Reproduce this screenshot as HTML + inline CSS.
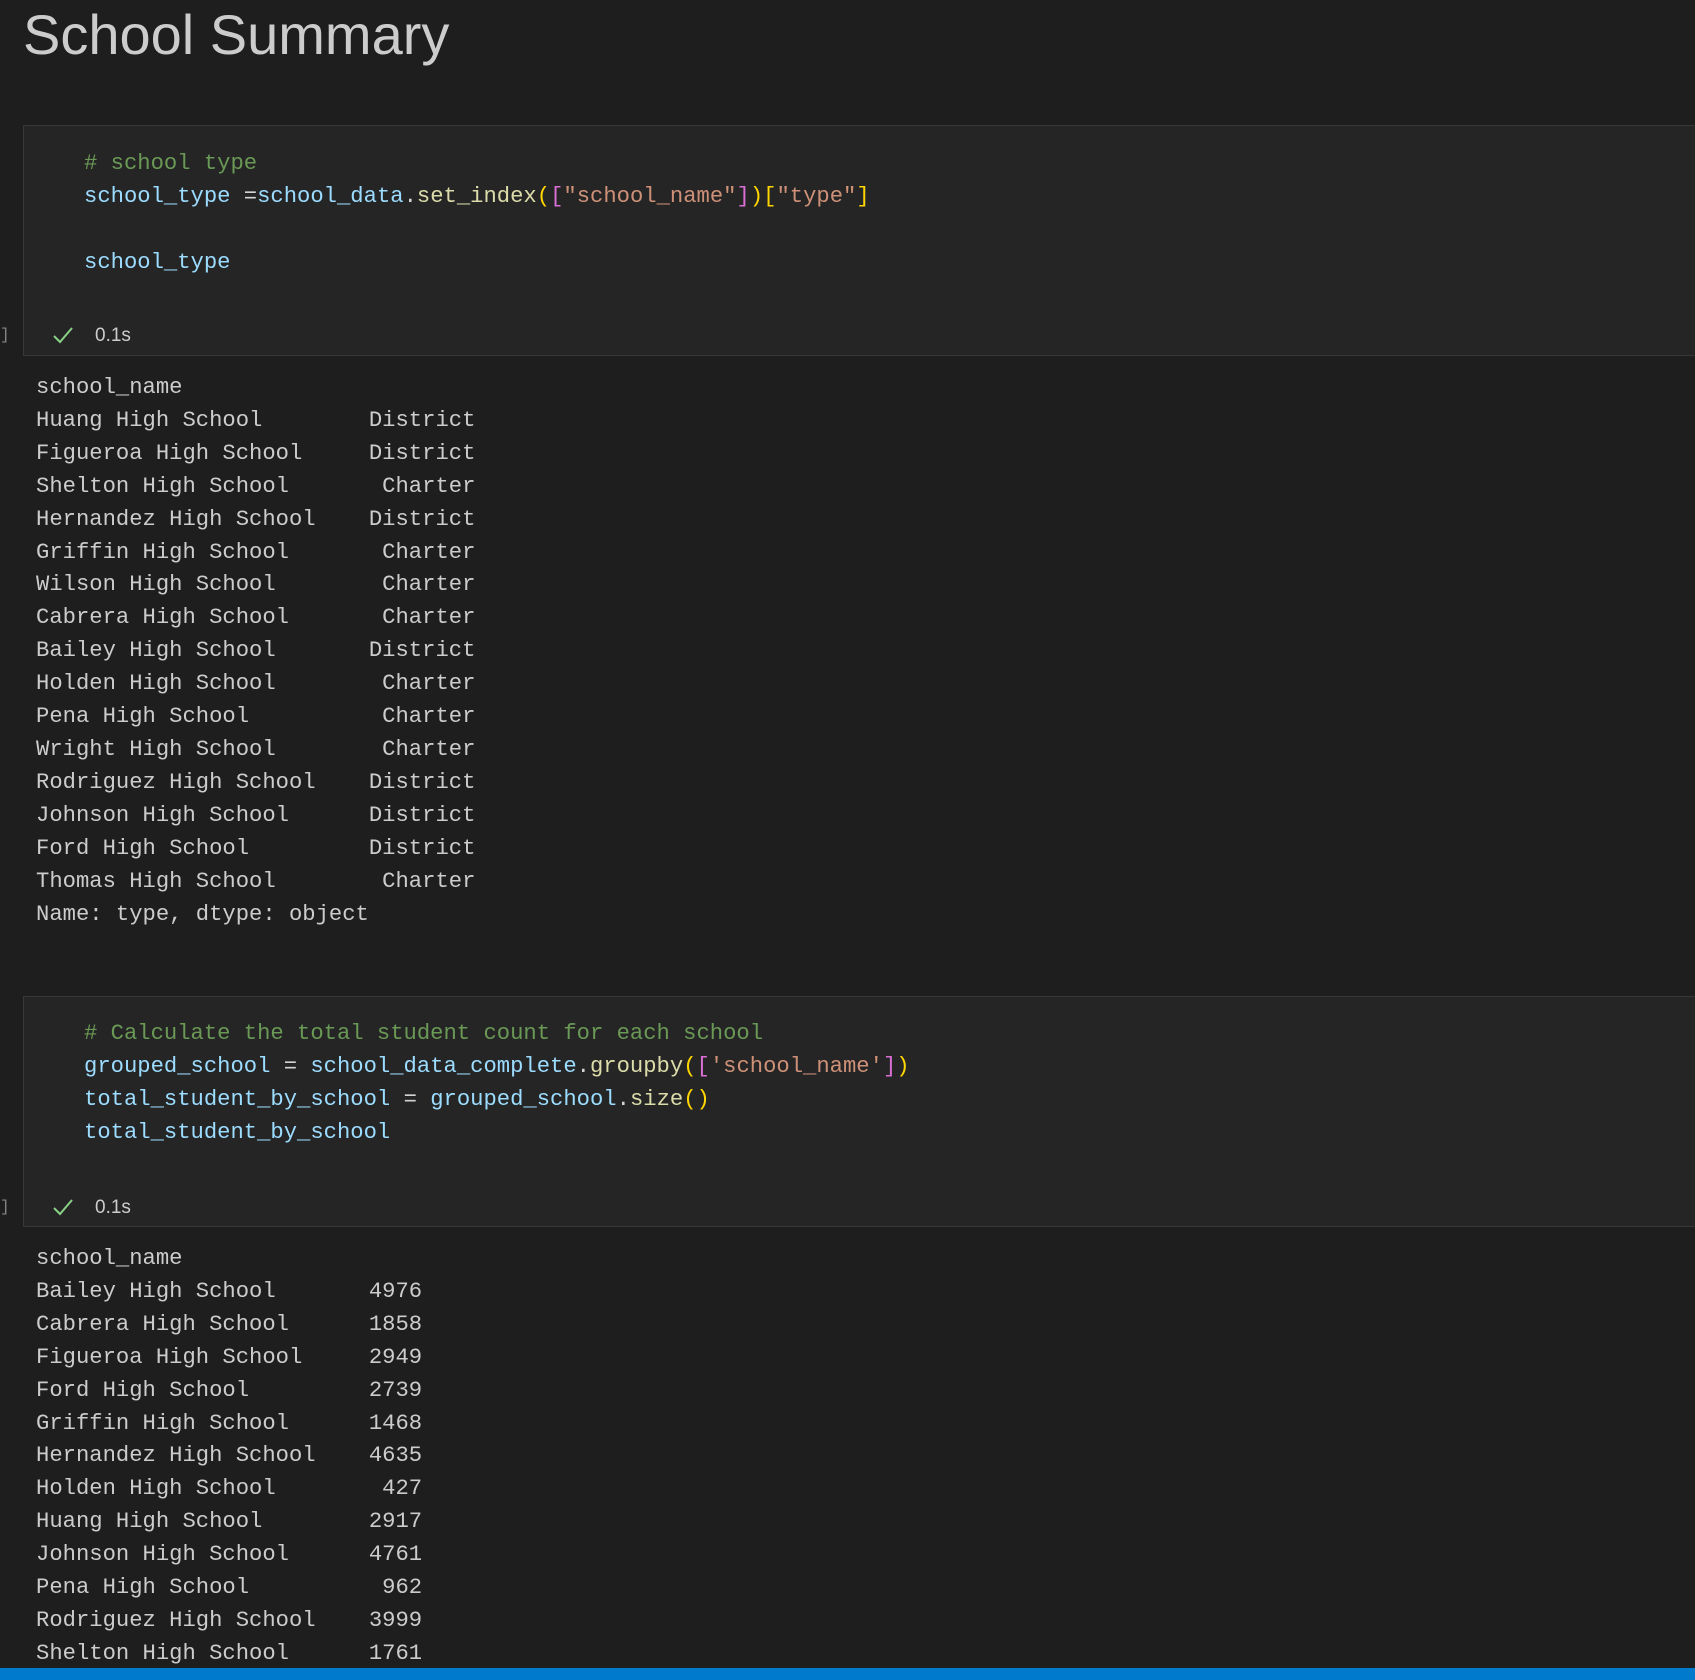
<!DOCTYPE html>
<html><head><meta charset="utf-8"><style>
html,body{margin:0;padding:0;background:#1e1e1e;width:1695px;height:1680px;overflow:hidden;position:relative;}
.t{position:absolute;left:23px;top:2px;font-family:"Liberation Sans",sans-serif;font-size:56px;color:#cccccc;white-space:nowrap;}
.cell{position:absolute;left:23px;right:-2px;background:#252526;border:1px solid #383838;}
pre{margin:0;font-family:"Liberation Mono",monospace;font-size:22.2px;line-height:32.9px;position:absolute;white-space:pre;}
.code{left:84px;color:#d4d4d4;}
.out{left:36px;color:#cccccc;}
.c{color:#6a9955}.v{color:#9cdcfe}.f{color:#dcdcaa}.s{color:#ce9178}.y{color:#ffd700}.p{color:#da70d6}.b{color:#179fff}
.st{position:absolute;font-family:"Liberation Sans",sans-serif;font-size:19px;color:#cccccc;}
.br{position:absolute;left:0;font-family:"Liberation Mono",monospace;font-size:16px;color:#858585;}
.bar{position:absolute;left:0;top:1668px;width:1695px;height:12px;background:#007acc;}
</style></head><body>
<div class="t">School Summary</div>

<div class="cell" style="top:125px;height:229px;"></div>
<pre class="code" style="top:148px;"><span class="c"># school type</span>
<span class="v">school_type</span> =<span class="v">school_data</span>.<span class="f">set_index</span><span class="y">(</span><span class="p">[</span><span class="s">"school_name"</span><span class="p">]</span><span class="y">)</span><span class="y">[</span><span class="s">"type"</span><span class="y">]</span>

<span class="v">school_type</span></pre>
<svg style="position:absolute;left:52px;top:325px" width="22" height="20"><path d="M2 11 L8 17 L20 3" stroke="#89d185" stroke-width="2" fill="none"/></svg>
<div class="st" style="left:95px;top:325px;">0.1s</div>
<div class="br" style="top:326px;">]</div>

<pre class="out" style="top:372px;">school_name
Huang High School        District
Figueroa High School     District
Shelton High School       Charter
Hernandez High School    District
Griffin High School       Charter
Wilson High School        Charter
Cabrera High School       Charter
Bailey High School       District
Holden High School        Charter
Pena High School          Charter
Wright High School        Charter
Rodriguez High School    District
Johnson High School      District
Ford High School         District
Thomas High School        Charter
Name: type, dtype: object</pre>

<div class="cell" style="top:996px;height:229px;"></div>
<pre class="code" style="top:1018px;"><span class="c"># Calculate the total student count for each school</span>
<span class="v">grouped_school</span> = <span class="v">school_data_complete</span>.<span class="f">groupby</span><span class="y">(</span><span class="p">[</span><span class="s">'school_name'</span><span class="p">]</span><span class="y">)</span>
<span class="v">total_student_by_school</span> = <span class="v">grouped_school</span>.<span class="f">size</span><span class="y">()</span>
<span class="v">total_student_by_school</span></pre>
<svg style="position:absolute;left:52px;top:1197px" width="22" height="20"><path d="M2 11 L8 17 L20 3" stroke="#89d185" stroke-width="2" fill="none"/></svg>
<div class="st" style="left:95px;top:1197px;">0.1s</div>
<div class="br" style="top:1198px;">]</div>

<pre class="out" style="top:1243px;">school_name
Bailey High School       4976
Cabrera High School      1858
Figueroa High School     2949
Ford High School         2739
Griffin High School      1468
Hernandez High School    4635
Holden High School        427
Huang High School        2917
Johnson High School      4761
Pena High School          962
Rodriguez High School    3999
Shelton High School      1761</pre>

<div class="bar"></div>
</body></html>
